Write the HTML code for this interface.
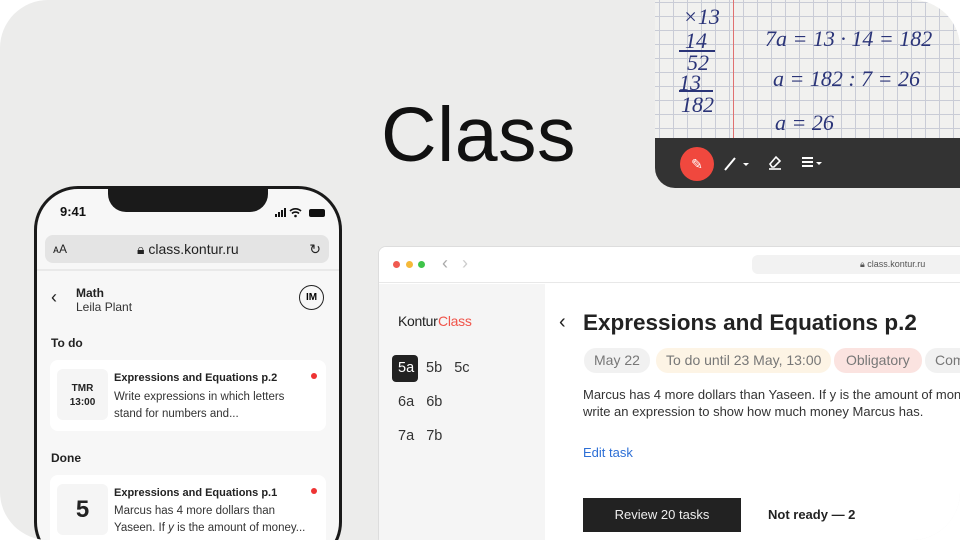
<!DOCTYPE html>
<html><head><meta charset="utf-8"><style>
*{margin:0;padding:0;box-sizing:border-box}
html,body{width:960px;height:540px;overflow:hidden;background:#fff;font-family:"Liberation Sans",sans-serif}
.card{position:absolute;left:0;top:0;width:960px;height:540px;background:#ececeb;border-radius:48px;overflow:hidden}
.title{position:absolute;left:381px;top:90px;font-size:77px;color:#111;letter-spacing:0.5px;font-weight:400;line-height:90px}
.nb{position:absolute;left:655px;top:0;width:305px;height:188px;border-bottom-left-radius:20px;overflow:hidden;background:#f3f3f1}
.grid{position:absolute;left:0;top:0;width:305px;height:140px;background-color:#f1f1ef;
background-image:linear-gradient(#c9ccd6 1px,transparent 1px),linear-gradient(90deg,#c9ccd6 1px,transparent 1px);background-size:14px 14px;background-position:4px 2px}
.hw{position:absolute;font-family:"Liberation Serif",serif;font-style:italic;color:#2a3478;font-size:22px;white-space:nowrap}
.tb{position:absolute;left:0;top:138px;width:305px;height:50px;background:#333}
.phone{position:absolute;left:34px;top:186px;width:308px;height:380px;border:3px solid #1a1a1a;border-radius:44px;background:#f7f7f7;overflow:hidden}
.notch{position:absolute;left:71px;top:-3px;width:160px;height:26px;background:#1a1a1a;border-radius:0 0 18px 18px}
.pcard{position:absolute;left:13px;width:276px;background:#fff;border-radius:8px}
.browser{position:absolute;left:378px;top:246px;width:600px;height:300px;background:#fff;border:1px solid #ddd;border-radius:8px;overflow:hidden}
.chip{position:absolute;top:348px;height:25px;border-radius:12px;font-size:14px;color:#777;line-height:25px;padding:0 10px;white-space:nowrap}
</style></head><body>
<div class="card">
<div class="title">Class</div>

<div class="nb">
 <div class="grid"></div>
 <div style="position:absolute;left:78px;top:0;width:1px;height:140px;background:#e07070"></div>
 <div class="hw" style="left:28px;top:4px;font-size:22px">×13</div>
 <div class="hw" style="left:30px;top:28px">14</div>
 <div style="position:absolute;left:24px;top:50px;width:36px;height:2px;background:#2a3478"></div>
 <div class="hw" style="left:32px;top:50px">52</div>
 <div class="hw" style="left:24px;top:70px">13</div>
 <div style="position:absolute;left:24px;top:90px;width:34px;height:2px;background:#2a3478"></div>
 <div class="hw" style="left:26px;top:92px">182</div>
 <div class="hw" style="left:110px;top:26px">7a = 13 · 14 = 182</div>
 <div class="hw" style="left:118px;top:66px">a = 182 : 7 = 26</div>
 <div class="hw" style="left:120px;top:110px">a = 26</div>
 <div class="tb">
  <div style="position:absolute;left:25px;top:9px;width:34px;height:34px;border-radius:50%;background:#f0483e;color:#fff;font-size:14px;text-align:center;line-height:34px">✎</div>
  <svg style="position:absolute;left:68px;top:16px" width="30" height="18"><path d="M2 16 L12 4" stroke="#fff" stroke-width="2"/><path d="M20 9h6l-3 3z" fill="#fff"/></svg>
  <svg style="position:absolute;left:112px;top:15px" width="16" height="18"><path d="M3 11l6-7 4 4-6 6H5z" stroke="#fff" stroke-width="1.6" fill="none"/><path d="M2 16h12" stroke="#fff" stroke-width="1.6"/></svg>
  <svg style="position:absolute;left:146px;top:18px" width="26" height="14"><path d="M1 2h11M1 6h11M1 10h11" stroke="#fff" stroke-width="2"/><path d="M15 6h6l-3 3z" fill="#fff"/></svg>
 </div>
</div>

<div class="phone">
 <div class="notch"></div>
 <div style="position:absolute;left:23px;top:15px;font-size:13px;font-weight:bold;color:#111">9:41</div>
 <svg style="position:absolute;left:238px;top:18px" width="60" height="12"><rect x="0" y="7" width="2" height="3" fill="#111"/><rect x="3" y="5" width="2" height="5" fill="#111"/><rect x="6" y="3" width="2" height="7" fill="#111"/><rect x="9" y="1" width="2" height="9" fill="#111"/><path d="M15 4a8 8 0 0 1 11 0M17 6.5a5 5 0 0 1 7 0" stroke="#111" stroke-width="1.6" fill="none"/><circle cx="20.5" cy="9" r="1.3" fill="#111"/><rect x="34" y="2" width="16" height="8" rx="2" fill="#111"/></svg>
 <div style="position:absolute;left:8px;top:46px;width:284px;height:28px;background:#e4e4e4;border-radius:8px;font-size:14px;color:#222;line-height:28px">
  <span style="position:absolute;left:8px;font-size:12px">ᴀA</span>
  <span style="position:absolute;left:92px">🔒︎ class.kontur.ru</span>
  <span style="position:absolute;right:8px">↻</span>
 </div>
 <div style="position:absolute;left:0;top:80px;width:302px;height:2px;background:#e9e9e9"></div>
 <div style="position:absolute;left:14px;top:98px;font-size:18px;color:#222">‹</div>
 <div style="position:absolute;left:39px;top:97px;font-size:12px;font-weight:bold;color:#222">Math</div>
 <div style="position:absolute;left:39px;top:111px;font-size:12px;color:#333">Leila Plant</div>
 <div style="position:absolute;left:262px;top:96px;width:25px;height:25px;border:1px solid #222;border-radius:50%;font-size:10px;font-weight:bold;text-align:center;line-height:23px">IM</div>
 <div style="position:absolute;left:14px;top:147px;font-size:12px;font-weight:bold;color:#222">To do</div>
 <div class="pcard" style="top:171px;height:71px">
  <div style="position:absolute;left:7px;top:9px;width:51px;height:51px;background:#f5f5f5;border-radius:6px;font-size:10px;font-weight:bold;text-align:center;padding-top:13px;line-height:14px;color:#222">TMR<br>13:00</div>
  <div style="position:absolute;left:64px;top:12px;font-size:11px;font-weight:bold;color:#222">Expressions and Equations p.2</div>
  <div style="position:absolute;left:64px;top:29px;font-size:11.5px;color:#333;line-height:17px">Write expressions in which letters<br>stand for numbers and...</div>
  <div style="position:absolute;right:9px;top:13px;width:6px;height:6px;border-radius:50%;background:#ee3333"></div>
 </div>
 <div style="position:absolute;left:14px;top:262px;font-size:12px;font-weight:bold;color:#222">Done</div>
 <div class="pcard" style="top:286px;height:80px">
  <div style="position:absolute;left:7px;top:9px;width:51px;height:51px;background:#f5f5f5;border-radius:6px;font-size:24px;font-weight:bold;text-align:center;line-height:51px;color:#222">5</div>
  <div style="position:absolute;left:64px;top:12px;font-size:11px;font-weight:bold;color:#222">Expressions and Equations p.1</div>
  <div style="position:absolute;left:64px;top:28px;font-size:11.5px;color:#333;line-height:17px">Marcus has 4 more dollars than<br>Yaseen. If <i>y</i> is the amount of money...</div>
  <div style="position:absolute;right:9px;top:13px;width:6px;height:6px;border-radius:50%;background:#ee3333"></div>
 </div>
</div>

<div class="browser">
 <div style="position:absolute;left:0;top:0;width:600px;height:36px;border-bottom:1px solid #e8e8e8;background:#fff"></div>
 <div style="position:absolute;left:14px;top:14px;width:7px;height:7px;border-radius:50%;background:#f05a50"></div>
 <div style="position:absolute;left:27px;top:14px;width:7px;height:7px;border-radius:50%;background:#f5b939"></div>
 <div style="position:absolute;left:39px;top:14px;width:7px;height:7px;border-radius:50%;background:#3fc44a"></div>
 <div style="position:absolute;left:63px;top:6px;font-size:18px;color:#aaa">‹</div>
 <div style="position:absolute;left:83px;top:6px;font-size:18px;color:#ccc">›</div>
 <div style="position:absolute;left:373px;top:8px;width:240px;height:19px;background:#f2f2f2;border-radius:6px;font-size:9px;color:#555;line-height:19px;padding-left:108px">🔒︎ class.kontur.ru</div>
 <div style="position:absolute;left:0;top:37px;width:166px;height:270px;background:#f5f5f5"></div>
 <div style="position:absolute;left:19px;top:66px;font-size:14px;color:#222;letter-spacing:-0.3px">Kontur <span style="color:#f0544a;margin-left:-3px">Class</span></div>
 <div style="position:absolute;left:13px;top:108px;width:26px;height:27px;background:#222;border-radius:4px"></div>
 <div style="position:absolute;left:19px;top:113px;font-size:14.5px;color:#fff">5a</div>
 <div style="position:absolute;left:47px;top:113px;font-size:14.5px;color:#333">5b &nbsp; 5c</div>
 <div style="position:absolute;left:19px;top:147px;font-size:14.5px;color:#333">6a &nbsp; 6b</div>
 <div style="position:absolute;left:19px;top:181px;font-size:14.5px;color:#333">7a &nbsp; 7b</div>
 <div style="position:absolute;left:180px;top:64px;font-size:20px;color:#222">‹</div>
 <div style="position:absolute;left:204px;top:63px;font-size:22.5px;font-weight:bold;color:#222;white-space:nowrap">Expressions and Equations p.2</div>
 <div style="position:absolute;left:204px;top:139px;font-size:13px;color:#333;line-height:17px;white-space:nowrap">Marcus has 4 more dollars than Yaseen. If y is the amount of money<br>write an expression to show how much money Marcus has.</div>
 <div style="position:absolute;left:204px;top:198px;font-size:13px;color:#2d6fd6">Edit task</div>
 <div style="position:absolute;left:204px;top:251px;width:158px;height:34px;background:#222;color:#eee;font-size:13px;text-align:center;line-height:34px">Review 20 tasks</div>
 <div style="position:absolute;left:389px;top:260px;font-size:13px;font-weight:bold;color:#222">Not ready — 2</div>
</div>
<div class="chip" style="left:584px;background:#f1f1f1">May 22</div>
<div class="chip" style="left:656px;background:#fdf4e5">To do until 23 May, 13:00</div>
<div class="chip" style="left:834px;background:#fbe3e0;padding:0 12px">Obligatory</div>
<div class="chip" style="left:925px;background:#f1f1f1;width:60px">Com</div>
</div>
</body></html>
